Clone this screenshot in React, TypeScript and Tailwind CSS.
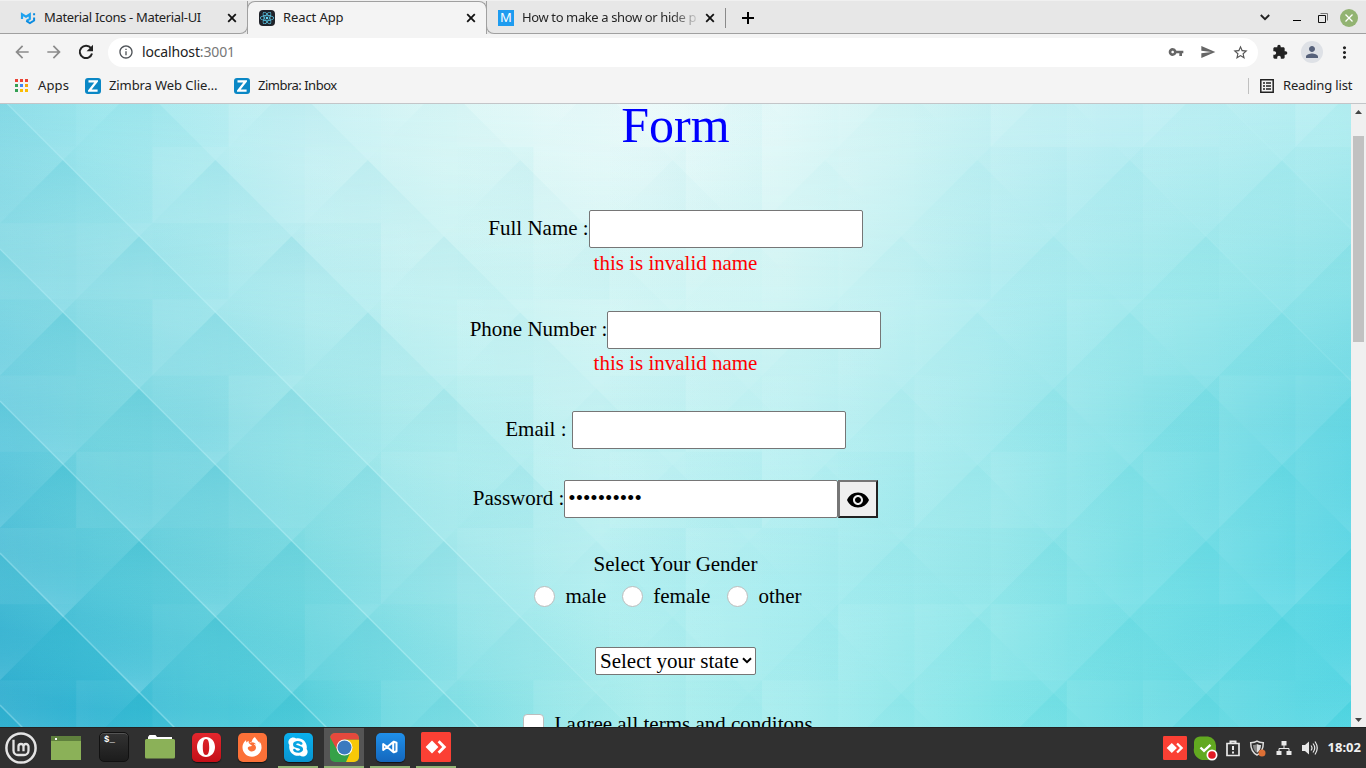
import React from "react";
import {
  MdArrowBack, MdArrowForward, MdInfoOutline, MdVpnKey, MdSend, MdStarBorder,
  MdExtension, MdPerson, MdMoreVert, MdVisibility,
} from "react-icons/md";
import { FaFirefoxBrowser, FaReact, FaSkype } from "react-icons/fa";

/* ---------- Mosaic background ---------- */
const W = 1351;
const H = 623;
const STEP = 76.2;

const BANDS = [
  { y: 6, stops: [[0, "#90dde8"], [100, "#a2e8ee"], [200, "#b6edf1"], [300, "#c9f1f4"], [450, "#dcf7f6"], [650, "#edfafa"], [780, "#e2f8f8"], [900, "#d2f4f4"], [1100, "#c2eff4"], [1351, "#b6eef1"]] },
  { y: 176, stops: [[0, "#87d9e4"], [100, "#97e0e8"], [200, "#a8e8ed"], [300, "#bceef1"], [450, "#caf3f3"], [600, "#d6f6f5"], [780, "#d2f5f4"], [1000, "#b4edf1"], [1200, "#a0e9ec"], [1351, "#90e3e9"]] },
  { y: 326, stops: [[0, "#68cbdf"], [100, "#7ad6e0"], [200, "#86dae4"], [300, "#9ce5e9"], [450, "#b5eeef"], [600, "#c6f2f3"], [800, "#bcf0f2"], [1000, "#a2e9ed"], [1150, "#86e1e7"], [1351, "#64d6e3"]] },
  { y: 476, stops: [[0, "#46bad4"], [100, "#5ac9da"], [200, "#6ad1dd"], [300, "#7adae1"], [450, "#9de6ea"], [600, "#b8f0f1"], [800, "#abedf0"], [1000, "#96e7ea"], [1150, "#76dfe6"], [1351, "#58d5e4"]] },
  { y: 606, stops: [[0, "#2aabce"], [100, "#2fb4d2"], [200, "#45c4d7"], [300, "#55cedb"], [400, "#72dae2"], [550, "#98e7e9"], [650, "#b0efee"], [800, "#a5ecee"], [1000, "#82e5e8"], [1200, "#68dae3"], [1351, "#58d7e4"]] },
] as { y: number; stops: [number, string][] }[];

const noise = (a: number, b: number) => {
  const s = Math.sin(a * 12.9898 + b * 78.233) * 43758.5453;
  return s - Math.floor(s);
};

function Mosaic() {
  const diamonds: React.ReactNode[] = [];
  const cells: React.ReactNode[] = [];
  for (let r = -2; r < 11; r++) {
    for (let c = -1; c < 20; c++) {
      if ((r + c) % 2 !== 0) continue;
      const x = 63 + c * STEP;
      const y = 56 + r * STEP;
      const left = Math.max(0, 1 - x / 620);
      const right = Math.max(0, (x - 760) / 600);
      const depth = 0.3 + 0.7 * Math.min(1, Math.max(0, (y + 20) / 500));
      const strength = Math.min(1, 0.12 + 1.25 * Math.max(left, right * 0.5) * depth);
      diamonds.push(
        <polygon
          key={`d${r}-${c}`}
          points={`${x},${y} ${x + STEP},${y + STEP} ${x},${y + 2 * STEP} ${x - STEP},${y + STEP}`}
          fill={x > 740 ? "url(#facetRight)" : "url(#facetLeft)"}
          opacity={strength}
        />,
      );
    }
  }
  for (let r = -1; r < 9; r++) {
    for (let c = 0; c < 18; c++) {
      const n = noise(c + 1, r + 3);
      cells.push(
        <rect
          key={`c${r}-${c}`}
          x={c * STEP} y={43 + r * STEP} width={STEP} height={STEP}
          fill={n > 0.5 ? "url(#cellLight)" : "url(#cellDark)"}
          opacity={0.25 + Math.abs(n - 0.5) * 0.5}
        />,
      );
    }
  }
  return (
    <svg className="absolute inset-0" width={W} height={H} viewBox={`0 0 ${W} ${H}`} aria-hidden="true">
      <defs>
        {BANDS.map((b, i) => (
          <linearGradient key={i} id={`band${i}`} gradientUnits="userSpaceOnUse" x1="0" y1="0" x2={W} y2="0">
            {b.stops.map(([x, c]) => <stop key={x} offset={x / W} stopColor={c} />)}
          </linearGradient>
        ))}
        <linearGradient id="fade" x1="0" y1="0" x2="0" y2="1">
          <stop offset="0" stopColor="#fff" stopOpacity="1" /><stop offset="1" stopColor="#fff" stopOpacity="0" />
        </linearGradient>
        {BANDS.slice(0, -1).map((b, i) => (
          <mask key={i} id={`mask${i}`} maskUnits="userSpaceOnUse" x="0" y={b.y} width={W} height={BANDS[i + 1].y - b.y}>
            <rect x="0" y={b.y} width={W} height={BANDS[i + 1].y - b.y} fill="url(#fade)" />
          </mask>
        ))}
        <linearGradient id="facetLeft" x1="0.6" y1="0.05" x2="0.4" y2="0.95">
          <stop offset="0" stopColor="#08a8c2" stopOpacity="0.24" />
          <stop offset="0.55" stopColor="#5fd0e0" stopOpacity="0.04" />
          <stop offset="1" stopColor="#d0f6ff" stopOpacity="0.24" />
        </linearGradient>
        <linearGradient id="facetRight" x1="0.35" y1="0.1" x2="0.65" y2="0.9">
          <stop offset="0" stopColor="#1fc4cf" stopOpacity="0.22" />
          <stop offset="0.5" stopColor="#7adfe8" stopOpacity="0.02" />
          <stop offset="1" stopColor="#d4f6ff" stopOpacity="0.22" />
        </linearGradient>
        <linearGradient id="cellLight" x1="0" y1="0" x2="1" y2="0">
          <stop offset="0" stopColor="#fff" stopOpacity="0.14" /><stop offset="1" stopColor="#fff" stopOpacity="0.02" />
        </linearGradient>
        <linearGradient id="cellDark" x1="0" y1="0" x2="1" y2="0">
          <stop offset="0" stopColor="#20b8c8" stopOpacity="0.01" /><stop offset="1" stopColor="#20b8c8" stopOpacity="0.08" />
        </linearGradient>
        <linearGradient id="crest" gradientUnits="userSpaceOnUse" x1="0" y1="0" x2={W} y2="0">
          <stop offset="0" stopColor="#b8f0f8" stopOpacity="0.35" />
          <stop offset="0.33" stopColor="#c8f8fa" stopOpacity="0.4" />
          <stop offset="0.48" stopColor="#e0fbfb" stopOpacity="0" />
          <stop offset="0.8" stopColor="#e0fbfb" stopOpacity="0" />
          <stop offset="1" stopColor="#c8f8fa" stopOpacity="0.12" />
        </linearGradient>
      </defs>
      <rect width={W} height="10" fill="url(#band0)" />
      {BANDS.slice(0, -1).map((b, i) => {
        const h = BANDS[i + 1].y - b.y;
        return (
          <g key={i}>
            <rect x="0" y={b.y} width={W} height={h} fill={`url(#band${i + 1})`} />
            <rect x="0" y={b.y} width={W} height={h} fill={`url(#band${i})`} mask={`url(#mask${i})`} />
          </g>
        );
      })}
      <rect y={606} width={W} height="17" fill="url(#band4)" />
      {cells}
      {diamonds}
      <g stroke="url(#crest)" strokeWidth="1.4" fill="none">
        {[-1226, -1074, -7.5, 145, 297, 449, 601].map((o) => (
          <path key={o} d={`M0 ${o}L${W} ${o + W}`} />
        ))}
      </g>
    </svg>
  );
}

/* ---------- Browser chrome ---------- */
const MuiLogo = () => (
  <svg width="16" height="16" viewBox="0 0 16 16">
    <path d="M2 9V4.300l4 2.400 3.800-2.400v4.500L6.500 11" fill="none" stroke="#1fa2ef" strokeWidth="2.200" />
    <path d="M6.300 11l3.600 2 4.200-2.500V7.400M14.100 3.300v2" fill="none" stroke="#0a8be0" strokeWidth="2" />
  </svg>
);

const Close = ({ className }: { className: string }) => (
  <svg className={className} width="14" height="14" viewBox="0 0 14 14">
    <path d="M3.200 3.200l7.600 7.600M10.800 3.200l-7.600 7.600" stroke="#111" strokeWidth="1.800" />
  </svg>
);

const ZimbraIcon = () => (
  <span className="flex size-4 shrink-0 items-center justify-center rounded-[3px] bg-[#0a87c5]">
    <svg width="10" height="12" viewBox="0 0 10 12"><path d="M.5 1.3h8.2L1.4 10.6h8.2" fill="none" stroke="#fff" strokeWidth="2.2" /></svg>
  </span>
);

function TabStrip() {
  return (
    <div className="flex h-[34px] border-t border-[#f0f0f0] bg-[#e7e7e7] text-[13px] text-[#222]">
      <div className="flex w-[248px] items-center rounded-br-lg border-b border-r border-[#a0a0a0] pl-5 pt-px">
        <MuiLogo />
        <span className="ml-2 w-[160px] whitespace-nowrap tracking-[-0.33px]">Material Icons - Material-UI</span>
        <Close className="ml-[21px]" />
      </div>
      <div className="-ml-px flex w-[240px] items-center rounded-t-lg border-x border-t border-[#a0a0a0] bg-[#f4f4f4] pb-px pl-[11px]">
        <span className="flex size-4 items-center justify-center rounded-sm bg-[#20232a]"><FaReact className="size-[14px] text-[#61dafb]" /></span>
        <span className="ml-2 w-[160px] whitespace-nowrap tracking-[-0.1px]">React App</span>
        <Close className="ml-[21px]" />
      </div>
      <div className="-ml-px flex flex-1 items-center rounded-bl-lg border-b border-l border-[#a0a0a0] pl-[11px] pt-px">
        <span className="flex size-4 items-center justify-center bg-[#1e9cf0] text-[13px] text-white">M</span>
        <span className="ml-2 w-[175px] whitespace-nowrap bg-gradient-to-r from-[#222] from-85% to-[#22222222] bg-clip-text tracking-[-0.38px] text-transparent">How to make a show or hide p</span>
        <Close className="ml-[6px]" />
        <span className="ml-[8px] h-5 w-px bg-[#8a8a8a]" />
        <svg className="ml-[15px]" width="14" height="14" viewBox="0 0 14 14"><path d="M7 1v12M1 7h12" stroke="#000" strokeWidth="2" /></svg>
        <div className="ml-auto flex items-center pr-[8px]">
          <svg width="10" height="7" viewBox="0 0 10 7"><path d="M.8 1L5 5.2 9.2 1" fill="none" stroke="#222" strokeWidth="1.9" /></svg>
          <span className="ml-[23px] mt-[5px] h-px w-2 bg-black" />
          <svg className="ml-[17px]" width="10" height="10" viewBox="0 0 10 10" fill="none"><path d="M.5 2.5h7v7h-7z" stroke="#111" /><path d="M2.5.5h7v7" stroke="#777" /></svg>
          <span className="ml-[12px] flex size-[18px] items-center justify-center rounded-full bg-[#92b372]">
            <svg width="8" height="8" viewBox="0 0 8 8"><path d="M.5.5l7 7M7.5.5l-7 7" stroke="#fff" strokeWidth="1.3" /></svg>
          </span>
        </div>
      </div>
    </div>
  );
}

function Toolbar() {
  return (
    <div className="flex h-[36px] items-center bg-[#f4f4f4] pl-3">
      <MdArrowBack className="size-5 text-[#8b8b8b]" />
      <MdArrowForward className="ml-3 size-5 text-[#8b8b8b]" />
      <svg className="ml-3" width="20" height="20" viewBox="0 0 20 20">
        <path d="M15 6.200A6.200 6.200 0 1 0 16 11.500" fill="none" stroke="#222" strokeWidth="2" />
        <path d="M17 2.800v6.400h-6.400z" fill="#222" />
      </svg>
      <div className="ml-3 flex h-[29px] w-[1150px] items-center rounded-full bg-white pl-[10px] pr-[9px]">
        <MdInfoOutline className="size-4 text-[#4f5358]" />
        <span className="ml-2 pb-[2px] text-[14px] tracking-[-0.15px] text-[#222]">localhost<span className="text-[#777]">:3001</span></span>
        <MdVpnKey className="ml-auto size-4 text-[#666]" />
        <MdSend className="ml-4 size-4 text-[#666]" />
        <MdStarBorder className="ml-4 size-[17px] text-[#555]" />
      </div>
      <MdExtension className="ml-[14px] size-4 text-[#222]" />
      <span className="ml-[13px] flex size-[22px] items-center justify-center rounded-full bg-[#dee1e6]"><MdPerson className="size-[18px] text-[#56617a]" /></span>
      <MdMoreVert className="ml-[12px] size-[19px] text-[#222]" />
    </div>
  );
}

const APP_DOTS = ["bg-[#ea4335]", "bg-[#ea4335]", "bg-[#ea4335]", "bg-[#34a053]", "bg-[#4285f4]", "bg-[#f6a60b]", "bg-[#34a053]", "bg-[#fbbc04]", "bg-[#fbbc04]"];

function Bookmarks() {
  return (
    <div className="flex h-[34px] items-center border-b border-[#c3c5c8] bg-[#f4f4f4] pb-[2px] pl-[15px] text-[13px] text-[#222]">
      <span className="grid grid-cols-3 gap-[2px]">
        {APP_DOTS.map((c, i) => <i key={i} className={`size-[3px] ${c}`} />)}
      </span>
      <span className="ml-[10px] w-[47px] tracking-[0.15px]">Apps</span>
      <ZimbraIcon />
      <span className="ml-2 w-[125px] whitespace-nowrap tracking-[-0.09px]">Zimbra Web Clie…</span>
      <ZimbraIcon />
      <span className="ml-2 whitespace-nowrap tracking-[-0.5px]">Zimbra: Inbox</span>
      <span className="ml-auto h-4 w-px bg-[#c0c0c0]" />
      <svg className="ml-[11px]" width="14" height="14" viewBox="0 0 14 14"><path d="M.8.8h12.4v12.4H.8z" fill="none" stroke="#222" strokeWidth="1.5" /><path d="M3 4h2M6 4h5M3 7h2M6 7h5M3 10h2M6 10h5" stroke="#222" strokeWidth="1.6" /></svg>
      <span className="ml-[9px] w-[83px] whitespace-nowrap tracking-[-0.15px]">Reading list</span>
    </div>
  );
}

/* ---------- Form ---------- */
const field = "h-[38px] w-[274px] rounded-[2px] border border-[#767676] bg-white px-[3px] pb-[2px] outline-none";

function Field({ label, type = "text", value, children }: { label: React.ReactNode; type?: string; value?: string; children?: React.ReactNode }) {
  return (
    <div className="flex h-[38px]">
      <label className="mt-[6px] whitespace-pre leading-6">{label}</label>
      <input className={field} type={type} defaultValue={value} />
      {children}
    </div>
  );
}

const Radio = ({ label, className = "" }: { label: string; className?: string }) => (
  <label className={`flex items-center ${className}`}>
    <span className="mt-px mr-[10px] size-[21px] rounded-full border border-[#bdbdbd] bg-white" />
    {label}
  </label>
);

function Form() {
  return (
    <form className="relative flex flex-col items-center font-['Liberation_Serif',serif] text-[21px] leading-6 text-black">
      <h1 className="h-[106px] text-[50px] leading-[42px] text-[#0000ff]">Form</h1>
      <Field label="Full Name :" />
      <p className="mt-[3px] text-[#ff0000]">this is invalid name</p>
      <div className="mt-[36px]"><Field label="Phone Number :" /></div>
      <p className="mt-[2px] text-[#ff0000]">this is invalid name</p>
      <div className="mt-[36px]"><Field label="Email : " /></div>
      <div className="mt-[31px]">
        <Field label="Password :" type="password" value="secret1234">
          <button type="button" className="flex h-[38px] w-10 items-center justify-center border-2 border-b-[#222] border-l-[#767676] border-r-[#222] border-t-[#767676] bg-[#efefef] pt-[2px]">
            <MdVisibility className="size-6" />
          </button>
        </Field>
      </div>
      <p className="mt-[34px]">Select Your Gender</p>
      <div className="mr-[15px] mt-2 flex gap-4">
        <Radio label="male" /><Radio label="female" /><Radio label="other" className="ml-px" />
      </div>
      <button type="button" className="mt-[39px] flex h-7 w-[161px] items-center rounded-[2px] border border-[#767676] bg-white pl-1 pb-px whitespace-nowrap">
        Select your state
        <svg className="ml-[3px]" width="10" height="7" viewBox="0 0 10 7"><path d="M1 1.2l4 4 4-4" fill="none" stroke="#000" strokeWidth="2" /></svg>
      </button>
      <label className="mr-[15px] mt-[37px] flex whitespace-nowrap">
        <span className="mr-[10px] mt-[2px] size-[21px] rounded-[4px] border border-[#bdbdbd] bg-white" />
        I agree all terms and conditons
      </label>
    </form>
  );
}

function Scrollbar() {
  return (
    <div className="flex w-[15px] flex-col items-center bg-[#f0f0f0]">
      <svg className="mt-[6px]" width="7" height="4"><path d="M0 4h7L3.5 0z" fill="#444" /></svg>
      <span className="mt-[22px] h-[206px] w-[11px] bg-[#c1c1c1]" />
      <svg className="mb-[5px] mt-auto" width="7" height="4"><path d="M0 0h7L3.5 4z" fill="#444" /></svg>
    </div>
  );
}

/* ---------- Desktop panel ---------- */
const AnyDesk = ({ size }: { size: number }) => (
  <svg width={size} height={size} viewBox="0 0 30 30">
    <rect width="30" height="30" rx="1.5" fill="#fb4034" />
    <path d="M11 8.600L17.400 15 11 21.400 4.600 15zM16.600 10.300l2-2L25.300 15l-6.700 6.700-2-2L21.200 15z" fill="#fff" />
  </svg>
);

const Slot = ({ children, open, active }: { children: React.ReactNode; open?: boolean; active?: boolean }) => (
  <div className={`mr-[6px] flex h-full w-10 items-center justify-center border-b-2 ${open ? "border-[#93b576]" : "border-transparent"} ${active ? "bg-[#555]" : ""}`}>
    {children}
  </div>
);

const tile = "flex size-[29px] items-center justify-center rounded-[5px] shadow-[0_1px_1px_#111]";

const Folder = ({ win }: { win?: boolean }) =>
  win ? (
    <svg className="mt-[2px]" width="30" height="24" viewBox="0 0 30 24"><path d="M0 0h30v24H0z" fill="#8bb158" /><path d="M0 0h30v5H0z" fill="#5f803d" /><path d="M4 2h2v2H4z" fill="#fff" /></svg>
  ) : (
    <svg width="30" height="24" viewBox="0 0 30 24"><path d="M3 2l1.500-2h6L12 2h15v6H3z" fill="#fff" /><path d="M1.500 4h27A1.500 1.500 0 0 1 30 5.500V22a1.500 1.500 0 0 1-1.500 1.500h-27A1.500 1.500 0 0 1 0 22V5.500A1.500 1.500 0 0 1 1.500 4z" fill="#8bb158" /></svg>
  );

function Taskbar() {
  return (
    <div className="flex h-[41px] items-center border-t border-[#222] bg-[#303030]">
      <div className="flex h-full w-[46px] items-center pl-[5px]">
        <svg width="32" height="32" viewBox="0 0 32 32" fill="none" stroke="#e4e4e4">
          <circle cx="16" cy="16" r="14.600" strokeWidth="2.500" />
          <path d="M8.500 9v9.500a4.500 4.500 0 0 0 4.500 4.500h6a4.500 4.500 0 0 0 4.500-4.500v-4a2.500 2.500 0 0 0-5 0V18m0-3.500a2.500 2.500 0 0 0-5 0V18" strokeWidth="2.300" strokeLinecap="square" />
        </svg>
      </div>
      <Slot><Folder win /></Slot>
      <span className="w-[2px]" />
      <Slot>
        <span className="flex size-[30px] rounded-[5px] border border-[#111] bg-gradient-to-b from-[#333] to-[#1c1c1c] pl-1 font-['Liberation_Mono',monospace] text-[9px] font-bold leading-[15px] text-white shadow-[inset_0_1px_0_#555]">$_</span>
      </Slot>
      <Slot><Folder /></Slot>
      <Slot><span className={`${tile} bg-gradient-to-b from-[#e3262d] to-[#c40e17]`}>
        <svg width="20" height="22" viewBox="0 0 20 22"><path fillRule="evenodd" d="M10 1c5 0 9 4.200 9 10s-4 10-9 10-9-4.200-9-10S5 1 10 1zm0 2C7.600 3 6.800 6.500 6.800 11s.8 8 3.200 8 3.200-3.500 3.200-8S12.400 3 10 3z" fill="#fff" /></svg>
      </span></Slot>
      <Slot><span className={`${tile} bg-[#fc7138]`}><FaFirefoxBrowser className="size-5 text-white" /></span></Slot>
      <Slot open><span className={`${tile} bg-gradient-to-b from-[#0ab0ee] to-[#0894d0]`}><FaSkype className="size-[22px] text-white" /></span></Slot>
      <Slot open active>
        <svg width="29" height="29" viewBox="0 0 29 29">
          <defs><clipPath id="tileClip"><rect width="29" height="29" rx="5" /></clipPath></defs>
          <g clipPath="url(#tileClip)">
            <path d="M0 0h29v29H0z" fill="#35a148" />
            <path d="M14.500 6.500H29V29H16l5-11z" fill="#f8c808" />
            <path d="M0 0h29v6.500H14.500L7 17 0 4z" fill="#e5493d" />
          </g>
          <circle cx="14.500" cy="14.500" r="8" fill="#fff" /><circle cx="14.500" cy="14.500" r="7" fill="#3b7abf" />
        </svg>
      </Slot>
      <Slot open><span className={`${tile} bg-gradient-to-b from-[#2090ea] to-[#1467bd]`}>
        <svg width="16" height="14" viewBox="0 0 16 14"><path d="M1.200 4v6l4-3 6-5v10l-6-5zM11.200 1.500l3.300 1.300v8.400l-3.300 1.300" fill="none" stroke="#fff" strokeWidth="2" strokeLinejoin="round" /></svg>
      </span></Slot>
      <Slot open><AnyDesk size={30} /></Slot>
      <div className="ml-auto flex items-center pr-[5px]">
        <AnyDesk size={24} />
        <svg className="ml-[6px]" width="25" height="25" viewBox="0 0 25 25">
          <path d="M7 .5h8A9 9 0 0 1 23 10v6a8 8 0 0 1-8 8h-3A10 10 0 0 1 1 12V6a6 6 0 0 1 6-5.500z" fill="#62a920" />
          <path d="M7.500 11.500l3.500 3.300 6.500-6" fill="none" stroke="#fff" strokeWidth="2.400" />
          <circle cx="19" cy="19" r="5.500" fill="#fff" /><circle cx="19" cy="19" r="3.800" fill="#e01b24" />
        </svg>
        <svg className="ml-[7px]" width="16" height="17" viewBox="0 0 16 17" fill="none" stroke="#e8e8e8" strokeWidth="1.700"><path d="M2 3.500h12v12H2z" /><path d="M5.500 3V1.500h5V3M8 6v4M8 11.500v2" strokeWidth="2" /></svg>
        <svg className="ml-[8px]" width="18" height="17" viewBox="0 0 18 17"><path d="M8 1.200c2 1.300 4 1.500 6.300 1.500 0 6-1.500 9.800-6.300 12.300C3.200 12.500 1.700 8.700 1.700 2.700 4 2.700 6 2.500 8 1.200z" fill="none" stroke="#ddd" strokeWidth="1.500" /><path d="M8 4c1 .6 2.600 1 4 1-.2 4-1.500 6-4 7.800z" fill="#ddd" /><path d="M8 4c-1 .6-2.600 1-4 1 .2 4 1.500 6 4 7.800z" fill="#888" /><circle cx="13" cy="13" r="3.500" fill="#dc6f35" /></svg>
        <svg className="ml-[9px]" width="16" height="16" viewBox="0 0 16 16"><path d="M5.500 1h5v4.500h-5zM.5 11h5v4h-5zM10.500 11h5v4h-5z" fill="#e8e8e8" /><path d="M8 5v3.500M3 11V8.500h10V11" fill="none" stroke="#e8e8e8" /></svg>
        <svg className="ml-[10px]" width="16" height="16" viewBox="0 0 16 16"><path d="M0 5h3l4-3.500v13L3 11H0z" fill="#e8e8e8" /><path d="M9 5.500q2 2.500 0 5M11 3.500q3.500 4.500 0 9M13 1.500q4.500 6.500 0 13" fill="none" stroke="#e8e8e8" strokeWidth="1.200" /></svg>
        <span className="ml-[10px] text-[13px] font-bold text-[#f0f0f0]">18:02</span>
      </div>
    </div>
  );
}

export default function App() {
  return (
    <div className="flex h-[768px] w-[1366px] flex-col overflow-hidden font-['Noto_Sans',sans-serif]">
      <TabStrip />
      <Toolbar />
      <Bookmarks />
      <div className="flex h-[623px]">
        <main className="relative w-[1351px] overflow-hidden"><Mosaic /><Form /></main>
        <Scrollbar />
      </div>
      <Taskbar />
    </div>
  );
}
